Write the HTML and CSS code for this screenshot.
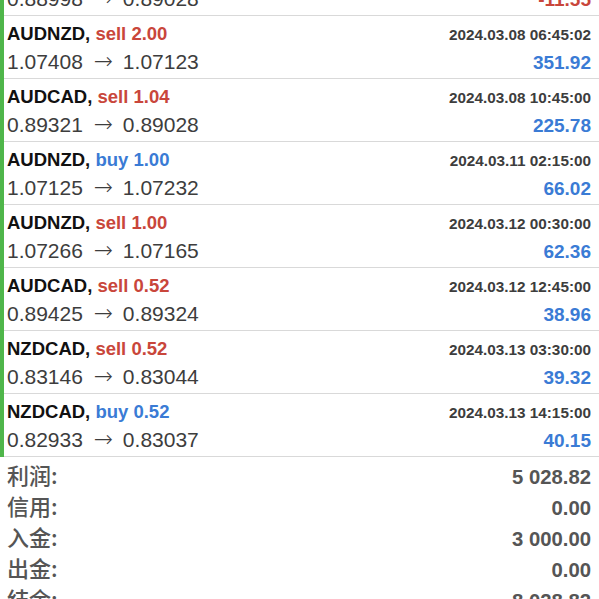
FILE: index.html
```html
<!DOCTYPE html>
<html lang="zh">
<head>
  <meta charset="UTF-8" />
  <title>历史</title>
  <meta name="viewport" content="width=device-width, initial-scale=1.0" />
  <link rel="stylesheet" href="styles.css">
</head>
<body>
  <ul class="deals">
    <li class="deal">
      <div class="line top">
        <span class="symbol">AUDCAD, <span class="buy">buy 1.00</span></span>
        <span class="time">2024.03.07 22:30:00</span>
      </div>
      <div class="line bottom">
        <span class="price">0.88998 <span class="arrow">→</span> 0.89028</span>
        <span class="profit loss">-11.55</span>
      </div>
    </li>
    <li class="deal">
      <div class="line top">
        <span class="symbol">AUDNZD, <span class="sell">sell 2.00</span></span>
        <span class="time">2024.03.08 06:45:02</span>
      </div>
      <div class="line bottom">
        <span class="price">1.07408 <span class="arrow">→</span> 1.07123</span>
        <span class="profit">351.92</span>
      </div>
    </li>
    <li class="deal">
      <div class="line top">
        <span class="symbol">AUDCAD, <span class="sell">sell 1.04</span></span>
        <span class="time">2024.03.08 10:45:00</span>
      </div>
      <div class="line bottom">
        <span class="price">0.89321 <span class="arrow">→</span> 0.89028</span>
        <span class="profit">225.78</span>
      </div>
    </li>
    <li class="deal">
      <div class="line top">
        <span class="symbol">AUDNZD, <span class="buy">buy 1.00</span></span>
        <span class="time">2024.03.11 02:15:00</span>
      </div>
      <div class="line bottom">
        <span class="price">1.07125 <span class="arrow">→</span> 1.07232</span>
        <span class="profit">66.02</span>
      </div>
    </li>
    <li class="deal">
      <div class="line top">
        <span class="symbol">AUDNZD, <span class="sell">sell 1.00</span></span>
        <span class="time">2024.03.12 00:30:00</span>
      </div>
      <div class="line bottom">
        <span class="price">1.07266 <span class="arrow">→</span> 1.07165</span>
        <span class="profit">62.36</span>
      </div>
    </li>
    <li class="deal">
      <div class="line top">
        <span class="symbol">AUDCAD, <span class="sell">sell 0.52</span></span>
        <span class="time">2024.03.12 12:45:00</span>
      </div>
      <div class="line bottom">
        <span class="price">0.89425 <span class="arrow">→</span> 0.89324</span>
        <span class="profit">38.96</span>
      </div>
    </li>
    <li class="deal">
      <div class="line top">
        <span class="symbol">NZDCAD, <span class="sell">sell 0.52</span></span>
        <span class="time">2024.03.13 03:30:00</span>
      </div>
      <div class="line bottom">
        <span class="price">0.83146 <span class="arrow">→</span> 0.83044</span>
        <span class="profit">39.32</span>
      </div>
    </li>
    <li class="deal">
      <div class="line top">
        <span class="symbol">NZDCAD, <span class="buy">buy 0.52</span></span>
        <span class="time">2024.03.13 14:15:00</span>
      </div>
      <div class="line bottom">
        <span class="price">0.82933 <span class="arrow">→</span> 0.83037</span>
        <span class="profit">40.15</span>
      </div>
    </li>
  </ul>

  <div class="summary">
    <div class="sum-row"><span class="label">利润:</span><span class="value">5 028.82</span></div>
    <div class="sum-row"><span class="label">信用:</span><span class="value">0.00</span></div>
    <div class="sum-row"><span class="label">入金:</span><span class="value">3 000.00</span></div>
    <div class="sum-row"><span class="label">出金:</span><span class="value">0.00</span></div>
    <div class="sum-row"><span class="label">结余:</span><span class="value">8 028.82</span></div>
  </div>
</body>
</html>
```

FILE: styles.css
```css
:root {
  --green: #4fb64a;
  --line: #d9d9d9;
  --sell: #c9463b;
  --buy: #3a7bd5;
  --gray: #3d3d3d;
  --sum: #555;
}

* {
  box-sizing: border-box;
}

body {
  margin: 0;
  background: #fff;
  font-family: "Liberation Sans", Arial, "Noto Sans CJK SC", sans-serif;
  overflow: hidden;
}

.deals {
  list-style: none;
  margin: -47px 0 0 0;
  padding: 0;
  border-left: 4px solid var(--green);
}

.deal {
  height: 63px;
  padding: 6px 8px 0 3px;
  border-bottom: 1px solid var(--line);
}

.line {
  display: flex;
  justify-content: space-between;
  align-items: baseline;
}

.line.top {
  height: 24px;
  line-height: 24px;
}

.line.bottom {
  height: 32px;
  line-height: 32px;
}

.symbol {
  font-size: 18.5px;
  font-weight: bold;
  color: #111;
}

.sell {
  color: var(--sell);
}

.buy {
  color: var(--buy);
}

.time {
  font-size: 15.3px;
  font-weight: bold;
  color: var(--gray);
}

.price {
  font-size: 21px;
  color: var(--gray);
}

.arrow {
  font-family: "DejaVu Sans", sans-serif;
  font-size: 23px;
  font-weight: 300;
  line-height: 0;
  margin: 0 4px 0 5px;
}

.profit {
  font-size: 19px;
  font-weight: bold;
  color: var(--buy);
}

.profit.loss {
  color: var(--sell);
}

.summary {
  padding: 2px 8px 0 7px;
}

.sum-row {
  display: flex;
  justify-content: space-between;
  align-items: baseline;
  height: 31px;
  line-height: 31px;
  color: var(--sum);
}

.label {
  font-family: "Noto Sans CJK SC", sans-serif;
  font-size: 22px;
  font-weight: 500;
}

.value {
  font-size: 20.3px;
  font-weight: bold;
}
```
